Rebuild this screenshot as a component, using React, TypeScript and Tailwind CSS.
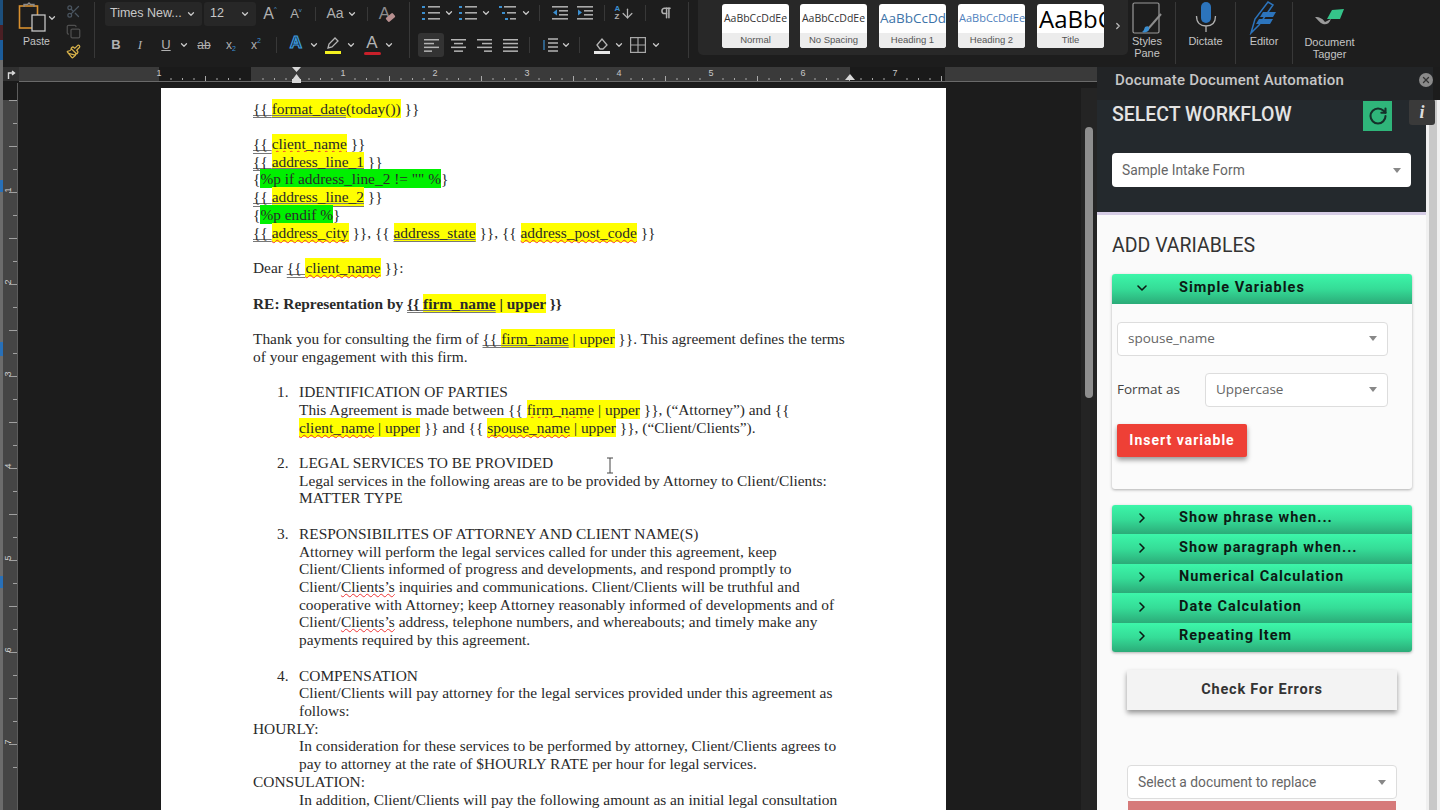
import React from 'react';
import { ChevronDown, ChevronRight, RotateCw, Scissors, Copy, Paintbrush, X, ArrowDown, Pilcrow } from 'lucide-react';

type Seg = string | { t: string; bg?: 'y' | 'g'; u?: 'gray' | 'red' };

const B = (t: string): Seg => ({ t, u: 'gray' });
const Y = (t: string, u?: 'gray' | 'red'): Seg => ({ t, bg: 'y', u });
const G = (t: string, u?: 'gray' | 'red'): Seg => ({ t, bg: 'g', u });
const R = (t: string): Seg => ({ t, u: 'red' });

type Line = { segs?: Seg[]; indent?: 'num' | 'body'; num?: string; bold?: boolean };

const doc: Line[] = [
  { segs: [B('{{ '), Y('format_date', 'gray'), Y('(today())'), ' }}'] },
  {},
  { segs: [B('{{ '), Y('client_name', 'red'), ' }}'] },
  { segs: [B('{{ '), Y('address_line_1', 'gray'), ' }}'] },
  { segs: ['{', G('%p if address_line_2 != "" %'), '}'] },
  { segs: [B('{{ '), Y('address_line_2', 'gray'), ' }}'] },
  { segs: ['{', G('%p endif %'), '}'] },
  { segs: [B('{{ '), Y('address_city', 'red'), ' }}, {{ ', Y('address_state', 'gray'), ' }}, {{ ', Y('address_post_code', 'red'), ' }}'] },
  {},
  { segs: ['Dear ', B('{{ '), Y('client_name', 'red'), ' }}:'] },
  {},
  { bold: true, segs: ['RE: Representation by ', B('{{ '), Y('firm_name', 'gray'), Y(' | upper'), ' }}'] },
  {},
  { segs: ['Thank you for consulting the firm of ', B('{{ '), Y('firm_name', 'gray'), Y(' | upper'), ' }}. This agreement defines the terms'] },
  { segs: ['of your engagement with this firm.'] },
  {},
  { num: '1.', segs: ['IDENTIFICATION OF PARTIES'] },
  { indent: 'body', segs: ['This Agreement is made between {{ ', Y('firm_name', 'red'), Y(' | upper'), ' }}, (“Attorney”) and {{'] },
  { indent: 'body', segs: [Y('client_name', 'red'), Y(' | upper'), ' }} and {{ ', Y('spouse_name', 'red'), Y(' | upper'), ' }}, (“Client/Clients”).'] },
  {},
  { num: '2.', segs: ['LEGAL SERVICES TO BE PROVIDED'] },
  { indent: 'body', segs: ['Legal services in the following areas are to be provided by Attorney to Client/Clients:'] },
  { indent: 'body', segs: ['MATTER TYPE'] },
  {},
  { num: '3.', segs: ['RESPONSIBILITES OF ATTORNEY AND CLIENT NAME(S)'] },
  { indent: 'body', segs: ['Attorney will perform the legal services called for under this agreement, keep'] },
  { indent: 'body', segs: ['Client/Clients informed of progress and developments, and respond promptly to'] },
  { indent: 'body', segs: ['Client/', R('Clients’s'), ' inquiries and communications. Client/Clients will be truthful and'] },
  { indent: 'body', segs: ['cooperative with Attorney; keep Attorney reasonably informed of developments and of'] },
  { indent: 'body', segs: ['Client/', R('Clients’s'), ' address, telephone numbers, and whereabouts; and timely make any'] },
  { indent: 'body', segs: ['payments required by this agreement.'] },
  {},
  { num: '4.', segs: ['COMPENSATION'] },
  { indent: 'body', segs: ['Client/Clients will pay attorney for the legal services provided under this agreement as'] },
  { indent: 'body', segs: ['follows:'] },
  { segs: ['HOURLY:'] },
  { indent: 'body', segs: ['In consideration for these services to be performed by attorney, Client/Clients agrees to'] },
  { indent: 'body', segs: ['pay to attorney at the rate of $HOURLY RATE per hour for legal services.'] },
  { segs: ['CONSULATION:'] },
  { indent: 'body', segs: ['In addition, Client/Clients will pay the following amount as an initial legal consultation'] },
];

const SegView = ({ seg }: { seg: Seg }) => {
  if (typeof seg === 'string') return <span>{seg}</span>;
  return (
    <span
      className={`py-px [text-decoration-skip-ink:none] ${seg.bg === 'y' ? 'bg-[#ffff00]' : ''} ${seg.bg === 'g' ? 'bg-[#00f000]' : ''} ${
        seg.u === 'gray' ? 'underline decoration-double decoration-[#777]' : ''
      } ${seg.u === 'red' ? 'underline decoration-wavy decoration-[#e33] decoration-1' : ''}`}
    >
      {seg.t}
    </span>
  );
};

const Chev = ({ className = '' }: { className?: string }) => (
  <ChevronDown size={10} strokeWidth={3} className={`text-[#c8c8c8] ${className}`} />
);

const Sep = ({ className = '' }: { className?: string }) => <div className={`w-px bg-[#383838] ${className}`} />;

const ListIcon = ({ kind }: { kind: 'bullet' | 'num' | 'multi' }) => (
  <svg width="20" height="16" viewBox="0 0 20 16">
    {[2, 8, 14].map((y, i) => (
      <g key={y}>
        <rect x={kind === 'multi' ? 1 + i * 3 : 1} y={y - 1} width="3" height="2" fill="#3b8fd0" />
        <rect x={kind === 'multi' ? 6 + i * 3 : 7} y={y - 1} width={kind === 'multi' ? 12 - i * 3 : 12} height="1.6" fill="#aaa" />
      </g>
    ))}
  </svg>
);

const IndentIcon = ({ dir }: { dir: 'l' | 'r' }) => (
  <svg width="16" height="14" viewBox="0 0 16 14" fill="#aaa">
    <rect x="0" y="0" width="16" height="1.6" />
    <rect x="7" y="4" width="9" height="1.6" />
    <rect x="7" y="8" width="9" height="1.6" />
    <rect x="0" y="12" width="16" height="1.6" />
    <path d={dir === 'l' ? 'M5 3.5v6L1 6.5z' : 'M1 3.5v6l4-3z'} fill="#3b8fd0" />
  </svg>
);

const AlignIcon = ({ kind }: { kind: 'l' | 'c' | 'r' | 'j' }) => {
  const rows: [number, number][] =
    kind === 'l' ? [[0, 15], [0, 10], [0, 15], [0, 8]]
    : kind === 'c' ? [[0, 15], [3, 9], [0, 15], [3, 9]]
    : kind === 'r' ? [[0, 15], [5, 10], [0, 15], [7, 8]]
    : [[0, 15], [0, 15], [0, 15], [0, 15]];
  return (
    <svg width="15" height="13" viewBox="0 0 15 13" fill="#b4b4b4">
      {rows.map(([x, w], i) => (
        <rect key={i} x={x} y={i * 3.8} width={w} height="1.5" />
      ))}
    </svg>
  );
};

const LetterA = ({ color, bar, outline }: { color: string; bar?: string; outline?: boolean }) => (
  <span className="relative flex h-[22px] w-[20px] flex-col items-center">
    <span
      className="text-[17px] leading-[18px] font-['Liberation_Sans',sans-serif]"
      style={{ color: outline ? '#12263a' : color, WebkitTextStroke: outline ? `1.2px ${color}` : undefined, fontWeight: outline ? 700 : 400 }}
    >
      A
    </span>
    {bar && <span className="h-[3px] w-[17px] rounded-sm" style={{ background: bar }} />}
  </span>
);

const StyleCard = ({ label, preview, cls }: { label: string; preview: string; cls: string }) => (
  <div className="flex h-[44px] w-[67px] flex-col overflow-hidden rounded-[3px] bg-white">
    <div className={`flex h-[29px] items-center justify-center overflow-hidden whitespace-nowrap px-[1px] ${cls}`}>{preview}</div>
    <div className="flex h-[15px] items-center justify-center bg-[#ececec] text-[9.5px] text-[#555]">{label}</div>
  </div>
);

const RibbonLabel = ({ children }: { children: React.ReactNode }) => (
  <div className="text-center text-[11px] leading-[12px] font-medium text-[#c4c4c4]">{children}</div>
);

const Ribbon = () => (
  <div className="flex h-[67px] bg-[#1d1d1d] font-['Liberation_Sans',sans-serif] text-[#b0b0b0]">
    {/* Paste */}
    <div className="flex w-[55px] flex-col items-center pl-[14px] pt-[2px]">
      <div className="flex items-start">
        <svg width="28" height="30" viewBox="0 0 28 30" fill="none">
          <rect x="1.5" y="4" width="18" height="22" stroke="#d8902f" strokeWidth="1.6" />
          <path d="M6 5V2.5h3.5L11 1l1.5 1.5H16V5" stroke="#8c8c8c" strokeWidth="1.4" />
          <rect x="14" y="13" width="13" height="16" fill="#1d1d1d" stroke="#c4c4c4" strokeWidth="1.3" />
        </svg>
        <Chev className="mt-[11px] ml-[1px]" />
      </div>
      <div className="mt-[2px] mr-[2px] text-[10.5px] font-medium text-[#c4c4c4]">Paste</div>
    </div>
    <div className="mr-[6px] flex w-[30px] flex-col items-center gap-[5px] pt-[4px]">
      <Scissors size={15} className="text-[#4a5560]" />
      <Copy size={15} className="text-[#4f4f4f]" />
      <Paintbrush size={15} className="text-[#d8b24a]" />
    </div>
    <Sep className="mt-[2px] h-[56px]" />

    {/* Font */}
    <div className="ml-[10px] flex w-[306px] flex-col">
      <div className="flex h-[26px] items-center pt-[1px]">
        <div className="flex h-[24px] w-[97px] items-center justify-between rounded-[3px] bg-[#272727] pr-[6px] pl-[5px] text-[12.5px] font-medium whitespace-nowrap text-[#c8c8c8]">
          Times New... <Chev />
        </div>
        <div className="ml-[2px] flex h-[24px] w-[52px] items-center justify-between rounded-[3px] bg-[#272727] pr-[6px] pl-[6px] text-[12.5px] font-medium text-[#c8c8c8]">
          12 <Chev />
        </div>
        <div className="flex w-[26px] items-center justify-center pl-[2px] text-[16px]">A<span className="mb-[8px] text-[6px] text-[#4a9ad4]">^</span></div>
        <div className="flex w-[26px] items-center justify-center pl-[2px] text-[13px]">A<span className="mb-[6px] text-[6px] text-[#4a9ad4]">v</span></div>
        <Sep className="ml-[7px] h-[14px]" />
        <div className="flex w-[51px] items-center justify-center gap-[3px] text-[14px]">Aa<Chev /></div>
        <Sep className="h-[14px]" />
        <div className="flex w-[38px] items-center justify-center text-[17px] text-[#8d8d8d]">A<span className="mt-[7px] -ml-[4px] h-[5px] w-[9px] rotate-[-40deg] rounded-[1px] bg-[#b89090]" /></div>
      </div>
      <div className="mt-[7px] flex h-[24px] items-center">
        <div className="flex w-[22px] justify-center text-[13px] font-bold">B</div>
        <div className="flex w-[26px] justify-center text-[13px] italic font-['Liberation_Serif',serif]">I</div>
        <div className="flex w-[26px] justify-center text-[13px] underline">U</div>
        <Chev />
        <div className="flex w-[30px] justify-center text-[12px] line-through">ab</div>
        <div className="flex w-[24px] items-end justify-center text-[12px]">x<span className="mt-[5px] text-[7px] text-[#3b8fd0]">2</span></div>
        <div className="flex w-[26px] items-start justify-center text-[12px]">x<span className="text-[7px] text-[#3b8fd0]">2</span></div>
        <Sep className="ml-[7px] h-[16px]" />
        <div className="ml-[7px] flex w-[24px] justify-center"><LetterA color="#3f9bdc" outline /></div>
        <Chev className="ml-[1px]" />
        <div className="ml-[4px] flex w-[20px] justify-center">
          <span className="flex flex-col items-center">
            <svg width="16" height="14" viewBox="0 0 16 14" fill="none" stroke="#b4b4b4" strokeWidth="1.3"><path d="M3 11l1-4 6-6 3 3-6 6z" /></svg>
            <span className="h-[3px] w-[16px] bg-[#f3f020]" />
          </span>
        </div>
        <Chev className="ml-[3px]" />
        <div className="ml-[5px] flex w-[22px] justify-center"><LetterA color="#b4b4b4" bar="#c8202a" /></div>
        <Chev className="ml-[1px]" />
      </div>
    </div>
    <Sep className="ml-[-2px] mt-[2px] h-[56px]" />

    {/* Paragraph */}
    <div className="ml-[8px] flex w-[270px] flex-col">
      <div className="flex h-[26px] items-center">
        <div className="flex w-[26px] justify-center"><ListIcon kind="bullet" /></div>
        <Chev />
        <div className="ml-[1px] flex w-[26px] justify-center"><ListIcon kind="num" /></div>
        <Chev />
        <div className="ml-[4px] flex w-[26px] justify-center"><ListIcon kind="multi" /></div>
        <Chev />
        <Sep className="ml-[8px] h-[16px]" />
        <div className="ml-[8px] flex w-[24px] justify-center"><IndentIcon dir="l" /></div>
        <div className="ml-[1px] flex w-[24px] justify-center"><IndentIcon dir="r" /></div>
        <Sep className="ml-[7px] h-[16px]" />
        <div className="ml-[8px] flex w-[24px] items-center justify-center">
          <span className="flex flex-col text-[8px] leading-[8px] font-bold"><span className="text-[#3b8fd0]">A</span><span>Z</span></span>
          <ArrowDown size={15} className="text-[#b4b4b4]" />
        </div>
        <Sep className="ml-[8px] h-[16px]" />
        <div className="ml-[8px] flex w-[24px] justify-center"><Pilcrow size={14} strokeWidth={2.6} /></div>
      </div>
      <div className="mt-[7px] flex h-[24px] items-center">
        <div className="flex h-[24px] w-[26px] items-center justify-center rounded-[3px] bg-[#333]"><AlignIcon kind="l" /></div>
        <div className="ml-[1px] flex w-[26px] justify-center"><AlignIcon kind="c" /></div>
        <div className="flex w-[26px] justify-center"><AlignIcon kind="r" /></div>
        <div className="flex w-[26px] justify-center"><AlignIcon kind="j" /></div>
        <Sep className="ml-[6px] h-[16px]" />
        <div className="ml-[6px] flex w-[26px] justify-center">
          <svg width="18" height="16" viewBox="0 0 18 16" fill="none">
            <path d="M4 2h0M4 14h0" stroke="#3b8fd0" strokeWidth="3" />
            <path d="M8 2h10M8 6h10M8 10h10M8 14h10" stroke="#b4b4b4" strokeWidth="1.6" />
            <path d="M4 3v10" stroke="#3b8fd0" strokeWidth="1.2" />
          </svg>
        </div>
        <Chev className="-ml-[1px]" />
        <Sep className="ml-[8px] h-[16px]" />
        <div className="ml-[10px] flex w-[24px] justify-center">
          <svg width="18" height="18" viewBox="0 0 18 18" fill="none">
            <path d="M4 9l5-6 5 6-4 4H7z" stroke="#b4b4b4" strokeWidth="1.3" />
            <rect x="1" y="15" width="16" height="3" fill="#e6e6e6" />
          </svg>
        </div>
        <Chev />
        <div className="ml-[2px] flex w-[24px] justify-center">
          <svg width="16" height="16" viewBox="0 0 16 16" fill="none" stroke="#a8a8a8" strokeWidth="1.2"><rect x=".6" y=".6" width="14.8" height="14.8" /><path d="M8 .6v14.8M.6 8h14.8" /></svg>
        </div>
        <Chev className="ml-[1px]" />
      </div>
    </div>
    <Sep className="mt-[2px] h-[56px]" />

    {/* Styles gallery */}
    <div className="ml-[9px] flex h-[55px] w-[430px] items-start rounded-b-[5px] bg-[#282828] pt-[4px] pl-[24px]">
      <StyleCard label="Normal" preview="AaBbCcDdEe" cls="text-[10.5px] text-[#333] font-['Open_Sans',sans-serif]" />
      <div className="w-[11px]" />
      <StyleCard label="No Spacing" preview="AaBbCcDdEe" cls="text-[10.5px] text-[#333] font-['Open_Sans',sans-serif]" />
      <div className="w-[12px]" />
      <StyleCard label="Heading 1" preview="AaBbCcDdEe" cls="justify-start text-[13.5px] text-[#3c73a8] font-['Open_Sans',sans-serif]" />
      <div className="w-[12px]" />
      <StyleCard label="Heading 2" preview="AaBbCcDdEe" cls="justify-start text-[11px] text-[#4f81bd] font-['Open_Sans',sans-serif]" />
      <div className="w-[12px]" />
      <StyleCard label="Title" preview="AaBbCcDdEe" cls="justify-start pl-[2px] text-[24px] text-black font-['Open_Sans',sans-serif]" />
      <ChevronRight size={10} strokeWidth={3} className="mt-[17px] ml-[9px] text-[#bbb]" />
    </div>

    <div className="flex w-[38px] flex-col items-center pt-[2px]">
      <svg width="30" height="32" viewBox="0 0 30 32" fill="none">
        <rect x="1" y="1" width="26" height="30" rx="1.5" stroke="#9a9a9a" strokeWidth="1.2" />
        <path d="M29 12L16 27" stroke="#8c8c8c" strokeWidth="2" />
        <path d="M13 25c3-2 5 0 4 3-1 2-5 3-7 2 2-1 2-3 3-5z" fill="#3a8ed0" />
      </svg>
      <div className="mt-[1px]"><RibbonLabel>Styles<br />Pane</RibbonLabel></div>
    </div>
    <Sep className="ml-[9px] mt-[2px] h-[62px]" />
    <div className="flex w-[59px] flex-col items-center pt-[1px]">
      <svg width="22" height="32" viewBox="0 0 22 32" fill="none">
        <rect x="6" y="1" width="10" height="21" rx="5" fill="#2c74bc" />
        <path d="M1.5 15c0 7 4 10 9.500 10s9.500-3 9.500-10M11 25v6" stroke="#b0b0b0" strokeWidth="1.3" />
      </svg>
      <div className="mt-[2px]"><RibbonLabel>Dictate</RibbonLabel></div>
    </div>
    <Sep className="mt-[2px] h-[62px]" />
    <div className="flex w-[56px] flex-col items-center pt-[1px]">
      <svg width="32" height="34" viewBox="0 0 32 34" fill="none">
        <path d="M3 32L7 18 20 1l5 3L11 24z" stroke="#2c74bc" strokeWidth="1.5" />
        <path d="M15 11h13l-3 5H12zM11 18h14l-3 5H8z" fill="#2c74bc" />
      </svg>
      <div><RibbonLabel>Editor</RibbonLabel></div>
    </div>
    <Sep className="mt-[2px] h-[62px]" />
    <div className="flex w-[73px] flex-col items-center pt-[8px]">
      <svg width="32" height="18" viewBox="0 0 32 18" fill="none">
        <path d="M1 9c5 0 8 2 10 5l6-3c-2 5-5 6-8 5-3-1-5-4-8-7z" fill="#9a9a9a" />
        <path d="M13 11l5-9 12-1-4 10z" fill="#35c48a" />
      </svg>
      <div className="mt-[10px]"><RibbonLabel>Document<br />Tagger</RibbonLabel></div>
    </div>
    <div className="flex-1" />
  </div>
);

const HRuler = () => (
  <div className="flex h-[16px] bg-[#1a1a1a]">
    <div className="flex h-[14px] w-[16px] items-center justify-center bg-[#303030]">
      <svg width="9" height="9" viewBox="0 0 9 9" fill="none" stroke="#ddd" strokeWidth="1.400"><path d="M1.500 9V3h5M5 1l2.500 2L5 5" /></svg>
    </div>
    <svg width="1078" height="16" viewBox="0 0 1078 16" className="block">
      <rect x="0" y="0" width="140" height="14" fill="#3a3a3a" />
      <rect x="232" y="0" width="599" height="14" fill="#3a3a3a" />
      <rect x="926" y="0" width="152" height="14" fill="#3a3a3a" />
      <rect x="0" y="14" width="1078" height="1" fill="#6a6a6a" />
      {Array.from({ length: 86 }).map((_, i) => {
        const x = 48 + i * 11.5;
        const major = i % 8 === 0;
        return x > 140 && x < 926 ? <rect key={i} x={x} y={major ? 7 : i % 4 === 0 ? 9 : 11} width="1" height={major ? 0 : i % 4 === 0 ? 5 : 2} fill="#a8a8a8" /> : null;
      })}
      {[[140, '1'], [324, '1'], [416, '2'], [508, '3'], [600, '4'], [692, '5'], [784, '6'], [876, '7']].map(([x, t]) => (
        <text key={`${x}-${t}`} x={x as number} y="9" fontSize="9" fill="#c8c8c8" textAnchor="middle" fontFamily="Liberation Sans, sans-serif">{t}</text>
      ))}
      <path d="M273 0h9l-4.500 5zM273 13l4.500-6 4.500 6z" fill="#d8d8d8" />
      <rect x="273" y="12" width="9" height="4" fill="#d8d8d8" />
      <path d="M826 13l5-6 5 6z" fill="#d8d8d8" />
    </svg>
  </div>
);

const VRuler = () => (
  <div className="w-[15px] shrink-0 bg-[#1a1a1a]">
    <svg width="15" height="727" viewBox="0 0 15 727" className="block">
      <rect x="0" y="17" width="15" height="710" fill="#454545" />
      <rect x="14" y="0" width="1" height="727" fill="#5c5c5c" />
      {Array.from({ length: 30 }).map((_, i) => {
        const y = 17 + i * 23;
        return <rect key={i} x={i % 2 === 0 ? 6 : 10} y={y} width={i % 2 === 0 ? 8 : 4} height="1" fill="#a0a0a0" />;
      })}
      {[1, 2, 3, 4, 5, 6, 7].map((n, i) => (
        <text key={n} x="5" y={110 + i * 92} fontSize="9" fill="#d0d0d0" textAnchor="middle" fontFamily="Liberation Sans, sans-serif" transform={`rotate(-90 5 ${107 + i * 92})`}>{n}</text>
      ))}
    </svg>
  </div>
);

const Page = () => (
  <div className="w-[785px] shrink-0 overflow-hidden bg-white pt-[11.6px] pl-[92px] text-[15.4px] leading-[17.72px] text-[#2a2a2a] font-['Liberation_Serif',serif]">
    {doc.map((line, i) => (
      <div
        key={i}
        className={`h-[17.72px] whitespace-nowrap ${line.bold ? 'font-bold' : ''} ${line.indent === 'body' ? 'pl-[46px]' : ''} ${line.num ? 'flex pl-[24px]' : ''}`}
      >
        {line.num && <span className="w-[22px]">{line.num}</span>}
        <span>{line.segs?.map((s, j) => <SegView key={j} seg={s} />)}</span>
      </div>
    ))}
  </div>
);

const Select = ({ text, className, font = "font-['Open_Sans',sans-serif] text-[13.5px]" }: { text: string; className: string; font?: string }) => (
  <div className={`flex items-center justify-between rounded-[4px] border border-[#ddd] bg-white pr-[10px] pl-[10px] text-[#666] ${font} ${className}`}>
    <span>{text}</span>
    <span className="h-0 w-0 border-x-[4.500px] border-t-[5px] border-x-transparent border-t-[#888]" />
  </div>
);

const AccHeader = ({ label, open, round }: { label: string; open?: boolean; round?: string }) => (
  <div className={`flex h-[29.500px] items-center bg-gradient-to-b from-[#3cf6a9] via-[#35dc97] to-[#2bab78] pb-[2px] pl-[22px] text-[14.500px] font-bold tracking-[1px] text-[#0c1a14] ${round ?? ''}`}>
    {open ? <ChevronDown size={16} strokeWidth={2.400} /> : <ChevronRight size={16} strokeWidth={2.400} />}
    <span className="ml-[29px]">{label}</span>
  </div>
);

const Panel = () => (
  <div className="flex w-[343px] shrink-0 flex-col font-['Roboto',sans-serif]">
    <div className="flex h-[33px] w-[336px] items-start justify-between bg-[#222426] pt-[4px] pl-[18px]">
      <span className="text-[15px] leading-[18px] font-medium tracking-[0.2px] text-[#c6c6c6]">Documate Document Automation</span>
      <span className="mt-[2px] flex h-[14px] w-[14px] items-center justify-center rounded-full bg-[#8a8a8a]"><X size={10} strokeWidth={3} className="text-[#333]" /></span>
    </div>
    <div className="flex flex-1 overflow-hidden">
      <div className="flex w-[329px] shrink-0 flex-col">
        <div className="relative h-[112px] shrink-0 bg-[#24292d] px-[15px] pt-[1px]">
          <div className="flex h-[31px] items-start justify-between pr-[19px]">
            <span className="text-[19.500px] leading-[28px] font-medium text-[#e4e4e4]">SELECT WORKFLOW</span>
            <span className="flex h-[30px] w-[29px] items-center justify-center bg-[#2fb57a]"><RotateCw size={20} strokeWidth={2.500} className="text-[#15302a]" /></span>
          </div>
          <Select text="Sample Intake Form" className="mt-[21px] h-[34px] w-[299px] border-0" font="font-['Roboto',sans-serif] text-[13.8px]" />
          <span className="absolute top-[-1px] left-[312px] z-10 flex h-[26px] w-[26px] items-center justify-center rounded-[3px] bg-[#3a3a3a] font-['Liberation_Serif',serif] text-[18px] font-bold italic text-[#ddd]">i</span>
        </div>
        <div className="flex-1 border-t-[3px] border-[#d5cce5] bg-[#fafafa] pl-[15px]">
          <div className="mt-[19px] text-[19.500px] leading-[24px] text-[#333]">ADD VARIABLES</div>
          <div className="mt-[16px] w-[300px] rounded-[3px] bg-[#fbfbfb] shadow-[0_1px_3px_rgba(0,0,0,0.3)]">
            <AccHeader label="Simple Variables" open round="rounded-t-[3px]" />
            <div className="h-[185px] px-[5px] pt-[18px]">
              <Select text="spouse_name" className="h-[34px] w-[271px]" />
              <div className="mt-[17px] flex h-[34px] w-[271px] items-center justify-between">
                <span className="text-[13.500px] text-[#444] font-['Open_Sans',sans-serif]">Format as</span>
                <Select text="Uppercase" className="h-[34px] w-[183px]" />
              </div>
              <button className="mt-[17px] h-[33px] w-[130px] rounded-[2px] bg-[#ee4036] text-[14px] font-bold tracking-[1px] text-[#fff] shadow-[0_3px_5px_rgba(0,0,0,0.4)]">Insert variable</button>
            </div>
          </div>
          <div className="mt-[16px] w-[300px] overflow-hidden rounded-[3px] shadow-[0_1px_3px_rgba(0,0,0,0.3)]">
            {['Show phrase when...', 'Show paragraph when...', 'Numerical Calculation', 'Date Calculation', 'Repeating Item'].map((l) => (
              <AccHeader key={l} label={l} />
            ))}
          </div>
          <button className="mt-[18px] ml-[15px] h-[40px] w-[270px] bg-[#f3f3f3] text-[14.500px] font-bold tracking-[0.8px] text-[#333] shadow-[0_3px_5px_rgba(0,0,0,0.4)]">Check For Errors</button>
          <Select text="Select a document to replace" className="mt-[55px] ml-[15px] h-[34px] w-[270px] border-[#ccc]" font="font-['Roboto',sans-serif] text-[13.8px]" />
          <div className="mt-[2px] ml-[16px] h-[20px] w-[268px] bg-[#d67a7a]" />
        </div>
      </div>
      <div className="flex flex-1 justify-center bg-[#f0f0f0]">
        <div className="h-full w-[8px] bg-[#c8c8c8]" />
      </div>
    </div>
  </div>
);

const App = () => {
  return (
    <div className="flex h-[810px] w-[1440px] overflow-hidden bg-[#1c1c1c]">
      {/* sliver of the desktop behind the window */}
      <div className="flex w-[3px] shrink-0 flex-col bg-[#6c6c6c]">
        <div className="h-[25px] bg-[#1c4f7c]" />
        <div className="h-[15px] bg-[#4a1f24]" />
        <div className="h-[20px] bg-[#1b5c9a]" />
        <div className="h-[120px]" />
        <div className="h-[12px] bg-[#2870b8]" />
        <div className="h-[150px]" />
        <div className="h-[14px] bg-[#2870b8]" />
        <div className="h-[220px]" />
        <div className="h-[12px] bg-[#2870b8]" />
      </div>
      <div className="flex min-w-0 flex-1 flex-col">
        <Ribbon />
        <div className="flex flex-1 overflow-hidden">
          <div className="flex w-[1094px] shrink-0 flex-col">
            <HRuler />
            <div className="flex flex-1 overflow-hidden">
              <VRuler />
              <div className="flex flex-1 overflow-hidden bg-[#1c1c1c] pt-[5px] pl-[143px]">
                <div className="relative flex">
                  <Page />
                  <svg width="10" height="17" viewBox="0 0 10 17" fill="none" stroke="#444" strokeWidth="1" className="absolute top-[369px] left-[444px]"><path d="M2 1h6M5 1v15M2 16h6" /></svg>
                  {/* document scrollbar */}
                  <div className="ml-[135px] w-[16px] shrink-0 bg-[#242424] pt-[39px] pl-[4px]">
                    <div className="h-[271px] w-[8px] rounded-full bg-[#8e8e8e]" />
                  </div>
                </div>
              </div>
            </div>
          </div>
          <Panel />
        </div>
      </div>
    </div>
  );
};

export default App;
